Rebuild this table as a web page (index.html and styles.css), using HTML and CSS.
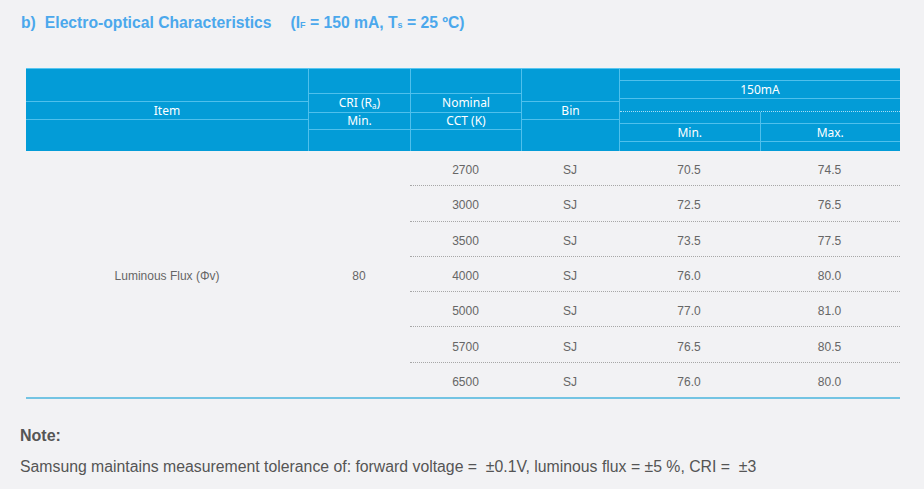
FILE: index.html
```html
<!DOCTYPE html>
<html>
<head>
<meta charset="utf-8">
<link rel="stylesheet" href="styles.css">
</head>
<body>
<div class="page">
  <h2 class="title"><span class="lbl">b)</span><span class="main">Electro-optical Characteristics</span><span class="cond">(I<sub>F</sub> = 150 mA, T<sub>s</sub> = 25 ºC)</span></h2>

  <div class="table">
    <div class="thead">
      <div class="hcell c-item">
        <div class="seg s32"></div>
        <div class="seg s16 line txt">Item</div>
        <div class="seg s32 line"></div>
      </div>
      <div class="hcell c-cri">
        <div class="seg s24"></div>
        <div class="seg s17 line txt">CRI (R<sub>a</sub>)</div>
        <div class="seg s15 line txt">Min.</div>
        <div class="seg s23 line"></div>
      </div>
      <div class="hcell c-cct">
        <div class="seg s24"></div>
        <div class="seg s17 line txt">Nominal</div>
        <div class="seg s15 line txt">CCT (K)</div>
        <div class="seg s23 line"></div>
      </div>
      <div class="hcell c-bin">
        <div class="seg s32"></div>
        <div class="seg s16 line txt">Bin</div>
        <div class="seg s32 line"></div>
      </div>
      <div class="hcell c-ma">
        <div class="seg s11"></div>
        <div class="seg s16 line txt">150mA</div>
        <div class="seg s12 line"></div>
        <div class="split">
          <div class="half">
            <div class="seg s11"></div>
            <div class="seg s16 line txt">Min.</div>
            <div class="seg s11 line"></div>
          </div>
          <div class="half right">
            <div class="seg s11"></div>
            <div class="seg s16 line txt">Max.</div>
            <div class="seg s11 line"></div>
          </div>
        </div>
      </div>
    </div>

    <div class="tbody">
      <div class="bcell c-item">Luminous Flux (Φv)</div>
      <div class="bcell c-cri">80</div>
      <div class="rows">
        <div class="row"><span>2700</span><span>SJ</span><span>70.5</span><span>74.5</span></div>
        <div class="row"><span>3000</span><span>SJ</span><span>72.5</span><span>76.5</span></div>
        <div class="row"><span>3500</span><span>SJ</span><span>73.5</span><span>77.5</span></div>
        <div class="row"><span>4000</span><span>SJ</span><span>76.0</span><span>80.0</span></div>
        <div class="row"><span>5000</span><span>SJ</span><span>77.0</span><span>81.0</span></div>
        <div class="row"><span>5700</span><span>SJ</span><span>76.5</span><span>80.5</span></div>
        <div class="row"><span>6500</span><span>SJ</span><span>76.0</span><span>80.0</span></div>
      </div>
    </div>
  </div>

  <div class="note">
    <div class="note-title">Note:</div>
    <p class="note-text">Samsung maintains measurement tolerance of: forward voltage = &nbsp;±0.1V, luminous flux = ±5 %, CRI = &nbsp;±3</p>
  </div>
</div>
</body>
</html>
```

FILE: styles.css
```css
html, body {
  margin: 0;
  padding: 0;
  background: #f2f2f4;
}

.page {
  width: 924px;
  height: 489px;
  overflow: hidden;
  font-family: "Liberation Sans", Arial, sans-serif;
}

.title {
  margin: 0;
  padding: 14px 0 0 21px;
  height: 55px;
  box-sizing: border-box;
  font-size: 15.7px;
  font-weight: bold;
  color: #4ba8ec;
  line-height: 18px;
  display: flex;
  white-space: nowrap;
}
.title sub {
  font-size: 9px;
  vertical-align: baseline;
  position: relative;
  top: 0;
}
.title .main { margin-left: 9px; }
.title .cond { margin-left: 19px; }

.table {
  margin: 13px 0 0 26px;
  width: 874px;
}

.thead {
  display: flex;
  background: #039cd7;
  border-top: 1px solid #58c6f0;
  height: 83px;
  overflow: hidden;
  box-sizing: border-box;
  font-family: "Noto Sans", "Open Sans", sans-serif;
  color: #ffffff;
  font-size: 12px;
}

.hcell {
  display: flex;
  flex-direction: column;
  box-sizing: border-box;
}
.hcell + .hcell { border-left: 1px solid #4fc0ec; }

.c-item { width: 282px; }
.c-cri { width: 102px; }
.c-cct { width: 111px; }
.c-bin { width: 98px; }
.c-ma { width: 281px; }

.seg {
  flex: none;
  display: flex;
  align-items: center;
  justify-content: center;
  line-height: 1;
  white-space: nowrap;
}
.seg.line { border-top: 1px solid #4fc0ec; }
.s11 { height: 11px; }
.s12 { height: 12px; }
.s15 { height: 16px; }
.s16 { height: 17px; }
.s17 { height: 18px; }
.s23 { height: 23px; }
.s24 { height: 24px; }
.s32 { height: 32px; }
.seg sub {
  font-size: 8px;
  vertical-align: baseline;
  position: relative;
  top: 3px;
}

.split {
  display: flex;
  border-top: 1px dotted #a8def5;
  flex: 1;
}
.half {
  flex: 1;
  display: flex;
  flex-direction: column;
}
.half.right { border-left: 1px solid #4fc0ec; }

.tbody {
  display: flex;
  height: 248px;
  border-bottom: 2px solid #74c4e3;
  box-sizing: border-box;
  font-size: 12px;
  color: #666;
}

.bcell {
  display: flex;
  align-items: center;
  justify-content: center;
  padding-top: 4px;
}

.rows {
  width: 490px;
  display: flex;
  flex-direction: column;
}
.row {
  flex: 1;
  display: grid;
  grid-template-columns: 111px 98px 140px 141px;
  align-items: center;
  justify-items: center;
  padding-top: 4px;
}
.row + .row { border-top: 1px dotted #a7a7a7; }

.note {
  padding: 27px 0 0 20px;
  color: #555;
}
.note-title {
  font-weight: bold;
  font-size: 16px;
  line-height: 19px;
}
.note-text {
  margin: 12px 0 0 0;
  font-size: 15.8px;
  line-height: 19px;
}
```
